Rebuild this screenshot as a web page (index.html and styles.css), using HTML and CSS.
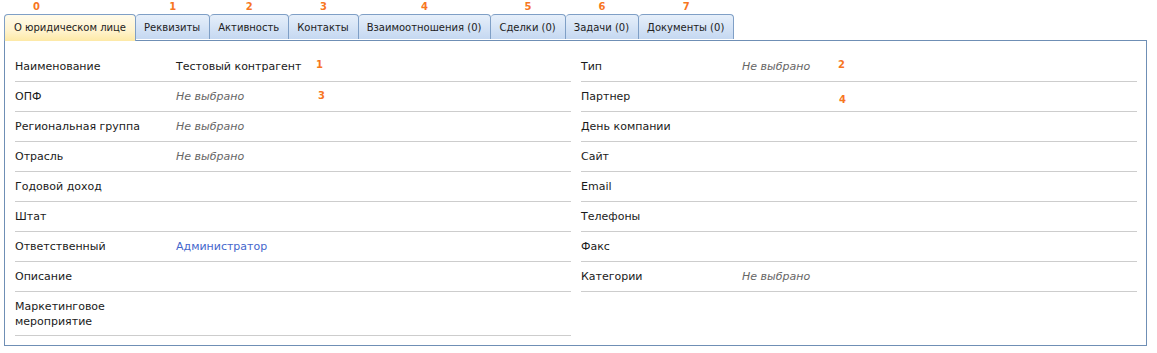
FILE: index.html
```html
<!DOCTYPE html>
<html lang="ru">
<head>
    <meta charset="UTF-8">
    <title>Контрагент</title>
    <link rel="stylesheet" href="styles.css">
</head>
<body>
    <div class="card">
        <ul class="tabs">
            <li class="tab active"><span class="mark mark-first">0</span>О юридическом лице</li>
            <li class="tab"><span class="mark">1</span>Реквизиты</li>
            <li class="tab"><span class="mark">2</span>Активность</li>
            <li class="tab"><span class="mark">3</span>Контакты</li>
            <li class="tab"><span class="mark">4</span>Взаимоотношения (0)</li>
            <li class="tab"><span class="mark">5</span>Сделки (0)</li>
            <li class="tab"><span class="mark">6</span>Задачи (0)</li>
            <li class="tab"><span class="mark">7</span>Документы (0)</li>
        </ul>
        <div class="panel">
            <div class="column">
                <div class="row">
                    <span class="label">Наименование</span>
                    <span class="value">Тестовый контрагент</span>
                    <span class="mark mark-row" style="left: 301px">1</span>
                </div>
                <div class="row">
                    <span class="label">ОПФ</span>
                    <span class="value empty">Не выбрано</span>
                    <span class="mark mark-row" style="left: 303px; top: 8px">3</span>
                </div>
                <div class="row">
                    <span class="label">Региональная группа</span>
                    <span class="value empty">Не выбрано</span>
                </div>
                <div class="row">
                    <span class="label">Отрасль</span>
                    <span class="value empty">Не выбрано</span>
                </div>
                <div class="row">
                    <span class="label">Годовой доход</span>
                    <span class="value"></span>
                </div>
                <div class="row">
                    <span class="label">Штат</span>
                    <span class="value"></span>
                </div>
                <div class="row">
                    <span class="label">Ответственный</span>
                    <a class="value link" href="#">Администратор</a>
                </div>
                <div class="row">
                    <span class="label">Описание</span>
                    <span class="value"></span>
                </div>
                <div class="row tall">
                    <span class="label">Маркетинговое<br>мероприятие</span>
                    <span class="value"></span>
                </div>
            </div>
            <div class="column">
                <div class="row">
                    <span class="label">Тип</span>
                    <span class="value empty">Не выбрано</span>
                    <span class="mark mark-row" style="left: 257px">2</span>
                </div>
                <div class="row">
                    <span class="label">Партнер</span>
                    <span class="value"></span>
                    <span class="mark mark-row" style="left: 258px; top: 12px">4</span>
                </div>
                <div class="row">
                    <span class="label">День компании</span>
                    <span class="value"></span>
                </div>
                <div class="row">
                    <span class="label">Сайт</span>
                    <span class="value"></span>
                </div>
                <div class="row">
                    <span class="label">Email</span>
                    <span class="value"></span>
                </div>
                <div class="row">
                    <span class="label">Телефоны</span>
                    <span class="value"></span>
                </div>
                <div class="row">
                    <span class="label">Факс</span>
                    <span class="value"></span>
                </div>
                <div class="row">
                    <span class="label">Категории</span>
                    <span class="value empty">Не выбрано</span>
                </div>
            </div>
        </div>
    </div>
</body>
</html>
```

FILE: styles.css
```css
body {
    margin: 0;
    padding: 14px 10px 0 4px;
    background: #fff;
    font-family: "DejaVu Sans", Verdana, sans-serif;
    font-size: 11px;
    color: #1a1a1a;
}
.card {
    width: 1143px;
}
.tabs {
    list-style: none;
    margin: 0;
    padding: 0;
    display: flex;
    position: relative;
    z-index: 1;
}
.tab {
    position: relative;
    height: 24px;
    line-height: 25px;
    padding: 0 9px 0 8px;
    border: 1px solid #7f9fc6;
    border-bottom: none;
    border-left: none;
    border-radius: 4px 4px 0 0;
    background: linear-gradient(#e6effa, #c5d8f1);
    color: #222;
    font-size: 10px;
    white-space: nowrap;
}
.tab.active {
    border-left: 1px solid #7f9fc6;
    padding-left: 9px;
    height: 26px;
    margin-bottom: -1px;
    background: linear-gradient(#fffbea 0%, #fff3cd 60%, #fde9a6 100%);
}
.mark {
    position: absolute;
    top: -14px;
    left: 0;
    right: 0;
    text-align: center;
    line-height: 12px;
    font-size: 10px;
    font-weight: bold;
    color: #f7771f;
    font-family: "DejaVu Sans", sans-serif;
}
.mark-first {
    left: 28px;
    right: auto;
}
.panel {
    border: 1px solid #6f8fb5;
    display: grid;
    grid-template-columns: 1fr 1fr;
    column-gap: 10px;
    padding: 11px 9px 9px 10px;
}
.row {
    position: relative;
    display: flex;
    min-height: 29px;
    border-bottom: 1px solid #cdcdcd;
    align-items: center;
    line-height: 15px;
}
.row.tall {
    min-height: 43px;
}
.label {
    width: 161px;
    flex-shrink: 0;
}
.value.empty {
    font-style: italic;
    color: #666;
}
.value.link {
    color: #4466cc;
    text-decoration: none;
}
.mark-row {
    right: auto;
    top: 7px;
}
```
